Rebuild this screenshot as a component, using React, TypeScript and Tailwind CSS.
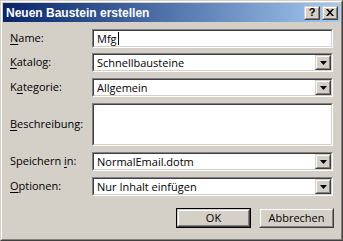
import React from 'react';

const font = { fontFamily: '"Open Sans", "Noto Sans", sans-serif' };

function Sunken({ children, className = '' }: { children?: React.ReactNode; className?: string }) {
  return (
    <div className={`border border-t-[#808080] border-l-[#808080] border-b-white border-r-white ${className}`}>
      <div className="h-full border border-t-[#404040] border-l-[#404040] border-b-[#d4d0c8] border-r-[#d4d0c8] bg-white">
        {children}
      </div>
    </div>
  );
}

function Raised({ children, className = '' }: { children?: React.ReactNode; className?: string }) {
  return (
    <div className={`border border-t-[#d4d0c8] border-l-[#d4d0c8] border-b-[#404040] border-r-[#404040] ${className}`}>
      <div className="flex h-full items-center justify-center border border-t-white border-l-white border-b-[#808080] border-r-[#808080] bg-[#d4d0c8]">
        {children}
      </div>
    </div>
  );
}

function Label({ text, u }: { text: string; u: number }) {
  return (
    <span className="w-[82px] shrink-0 text-[11px] text-black">
      {text.slice(0, u)}
      <span className="underline underline-offset-2">{text[u]}</span>
      {text.slice(u + 1)}
    </span>
  );
}

function Select({ value }: { value: string }) {
  return (
    <Sunken className="h-[19px] w-[241px]">
      <div className="flex h-full items-center justify-between">
        <span className="pl-[3px] text-[11px] leading-none">{value}</span>
        <Raised className="h-[15px] w-[16px]">
          <svg width="7" height="4" viewBox="0 0 7 4">
            <path d="M0 0h7L3.5 4z" fill="#000" />
          </svg>
        </Raised>
      </div>
    </Sunken>
  );
}

export default function App() {
  return (
    <div style={font} className="h-[241px] w-[343px] border border-t-[#d4d0c8] border-l-[#d4d0c8] border-b-[#404040] border-r-[#404040]">
      <div className="flex h-full flex-col border border-t-white border-l-white border-b-[#808080] border-r-[#808080] bg-[#d4d0c8] p-[1px]">
        {/* title bar */}
        <div className="flex h-[19px] items-center justify-between bg-gradient-to-r from-[#0a246a] to-[#a6caf0] pl-[3px] pr-[2px]">
          <span className="text-[12px] font-bold text-white" style={{ fontFamily: '"Liberation Sans", Arial, sans-serif' }}>
            Neuen Baustein erstellen
          </span>
          <div className="flex gap-[2px]">
            <Raised className="h-[14px] w-[16px]">
              <span className="text-[11px] font-bold leading-none" style={{ fontFamily: '"Liberation Sans", sans-serif' }}>?</span>
            </Raised>
            <Raised className="h-[14px] w-[16px]">
              <svg width="8" height="7" viewBox="0 0 8 7">
                <path d="M0 0h2l2 2.2L6 0h2L5 3.5 8 7H6L4 4.8 2 7H0l3-3.5z" fill="#000" />
              </svg>
            </Raised>
          </div>
        </div>

        <div className="flex flex-col pl-[7px] pt-[7px]">
          <div className="flex items-center">
            <Label text="Name:" u={0} />
            <Sunken className="h-[19px] w-[241px]">
              <div className="flex h-full items-center pl-[3px] text-[11px] leading-none">
                Mfg<span className="ml-[1px] inline-block h-[13px] w-[1px] bg-black" />
              </div>
            </Sunken>
          </div>
          <div className="mt-[5px] flex items-center">
            <Label text="Katalog:" u={0} />
            <Select value="Schnellbausteine" />
          </div>
          <div className="mt-[6px] flex items-center">
            <Label text="Kategorie:" u={1} />
            <Select value="Allgemein" />
          </div>
          <div className="mt-[6px] flex items-center">
            <Label text="Beschreibung:" u={0} />
            <Sunken className="h-[43px] w-[241px]" />
          </div>
          <div className="mt-[6px] flex items-center">
            <Label text="Speichern in:" u={10} />
            <Select value="NormalEmail.dotm" />
          </div>
          <div className="mt-[6px] flex items-center">
            <Label text="Optionen:" u={0} />
            <Select value="Nur Inhalt einfügen" />
          </div>
          <div className="mt-[12px] flex gap-[8px] pl-[166px]">
            <div className="border border-black">
              <Raised className="h-[18px] w-[73px]">
                <span className="text-[11px]">OK</span>
              </Raised>
            </div>
            <Raised className="h-[20px] w-[75px]">
              <span className="text-[11px]">Abbrechen</span>
            </Raised>
          </div>
        </div>
      </div>
    </div>
  );
}
